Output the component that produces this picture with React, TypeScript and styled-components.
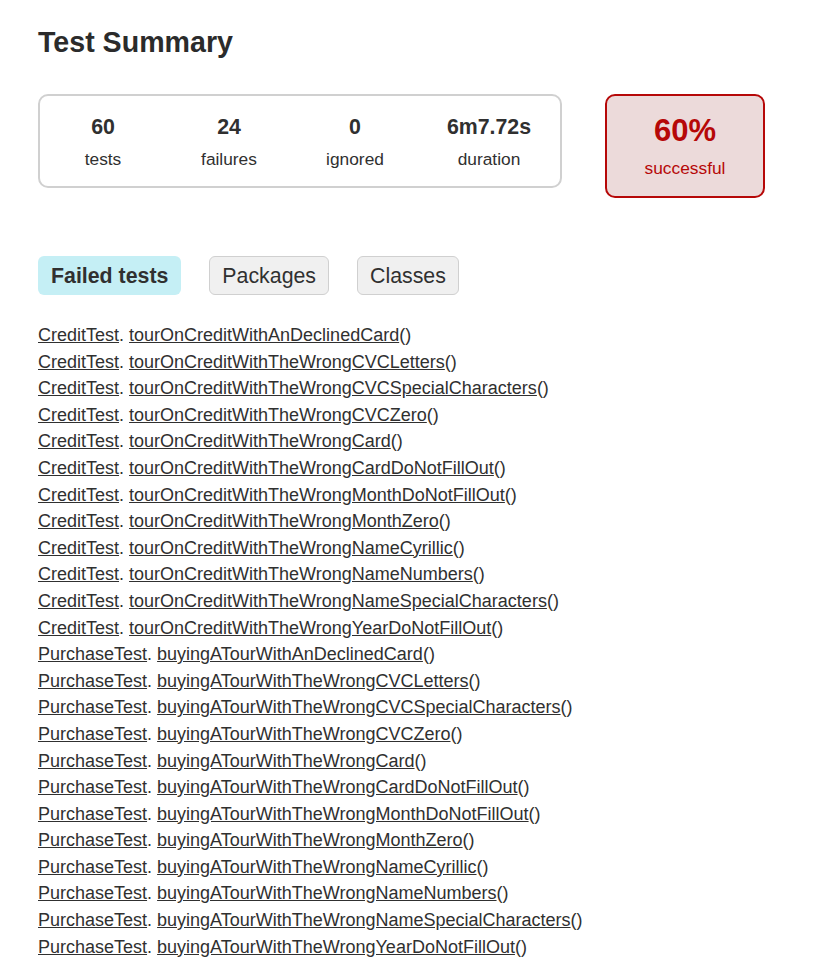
import React from "react";
import styled, { createGlobalStyle } from "styled-components";

const Global = createGlobalStyle`
  html, body { margin: 0; padding: 0; background: #ffffff; }
  body { font-family: "Liberation Sans", Arial, sans-serif; font-size: 17.33px; color: #303030; }
`;

const Content = styled.div`
  padding: 26px 38px 0 38px;
`;

const Title = styled.h1`
  margin: 0;
  font-size: 28.6px;
  line-height: 32px;
  font-weight: bold;
  color: #2b2b2b;
`;

const SummaryRow = styled.div`
  display: flex;
  align-items: flex-start;
  gap: 43px;
  margin-top: 36px;
`;

const InfoBox = styled.div`
  display: grid;
  grid-template-columns: 126px 126px 126px 142px;
  border: 2px solid #d0d0d0;
  border-radius: 10px;
  padding: 19px 0 17px;
`;

const Counter = styled.div`
  display: flex;
  flex-direction: column;
  align-items: center;
  gap: 10px;
`;

const Value = styled.div`
  font-size: 21.33px;
  line-height: 24px;
  font-weight: bold;
  color: #303030;
`;

const Label = styled.div<{ $color?: string }>`
  font-size: 17.33px;
  line-height: 20px;
  color: ${(p) => p.$color || "#303030"};
`;

const SuccessBox = styled.div`
  width: 156px;
  border: 2px solid #b60808;
  border-radius: 10px;
  background: #ecdada;
  color: #b60808;
  padding: 17px 0 18px;
  display: flex;
  flex-direction: column;
  align-items: center;
  gap: 9px;
`;

const Percent = styled.div`
  font-size: 31px;
  line-height: 36px;
  font-weight: bold;
`;

const Tabs = styled.div`
  display: flex;
  gap: 28px;
  margin-top: 58px;
`;

const Tab = styled.div<{ $active?: boolean }>`
  font-size: 21.33px;
  line-height: 25px;
  font-weight: ${(p) => (p.$active ? "bold" : "normal")};
  color: #303030;
  border-radius: 6px;
  padding: ${(p) => (p.$active ? "8px 13px 6px" : "7px 12px 5px")};
  background: ${(p) => (p.$active ? "#c5eff5" : "#f0f0f0")};
  border: ${(p) => (p.$active ? "none" : "1px solid #d0d0d0")};
`;

const List = styled.ul`
  list-style: none;
  margin: 27px 0 0 0;
  padding: 0;
`;

const Item = styled.li`
  font-size: 18px;
  line-height: 26.6px;
  color: #303030;
  white-space: nowrap;
`;

const Link = styled.a`
  color: #303030;
  text-decoration: underline;
`;

const credit = [
  "tourOnCreditWithAnDeclinedCard",
  "tourOnCreditWithTheWrongCVCLetters",
  "tourOnCreditWithTheWrongCVCSpecialCharacters",
  "tourOnCreditWithTheWrongCVCZero",
  "tourOnCreditWithTheWrongCard",
  "tourOnCreditWithTheWrongCardDoNotFillOut",
  "tourOnCreditWithTheWrongMonthDoNotFillOut",
  "tourOnCreditWithTheWrongMonthZero",
  "tourOnCreditWithTheWrongNameCyrillic",
  "tourOnCreditWithTheWrongNameNumbers",
  "tourOnCreditWithTheWrongNameSpecialCharacters",
  "tourOnCreditWithTheWrongYearDoNotFillOut",
];

const purchase = [
  "buyingATourWithAnDeclinedCard",
  "buyingATourWithTheWrongCVCLetters",
  "buyingATourWithTheWrongCVCSpecialCharacters",
  "buyingATourWithTheWrongCVCZero",
  "buyingATourWithTheWrongCard",
  "buyingATourWithTheWrongCardDoNotFillOut",
  "buyingATourWithTheWrongMonthDoNotFillOut",
  "buyingATourWithTheWrongMonthZero",
  "buyingATourWithTheWrongNameCyrillic",
  "buyingATourWithTheWrongNameNumbers",
  "buyingATourWithTheWrongNameSpecialCharacters",
  "buyingATourWithTheWrongYearDoNotFillOut",
];

const rows = [
  ...credit.map((m) => ({ cls: "CreditTest", m })),
  ...purchase.map((m) => ({ cls: "PurchaseTest", m })),
];

const counters = [
  { v: "60", l: "tests" },
  { v: "24", l: "failures" },
  { v: "0", l: "ignored" },
  { v: "6m7.72s", l: "duration" },
];

export default function App() {
  return (
    <>
      <Global />
      <Content>
        <Title>Test Summary</Title>
        <SummaryRow>
          <InfoBox>
            {counters.map((c) => (
              <Counter key={c.l}>
                <Value>{c.v}</Value>
                <Label>{c.l}</Label>
              </Counter>
            ))}
          </InfoBox>
          <SuccessBox>
            <Percent>60%</Percent>
            <Label $color="#b60808">successful</Label>
          </SuccessBox>
        </SummaryRow>
        <Tabs>
          <Tab $active>Failed tests</Tab>
          <Tab>Packages</Tab>
          <Tab>Classes</Tab>
        </Tabs>
        <List>
          {rows.map((r) => (
            <Item key={r.cls + r.m}>
              <Link href="#">{r.cls}</Link>. <Link href="#">{r.m}</Link>()
            </Item>
          ))}
        </List>
      </Content>
    </>
  );
}
